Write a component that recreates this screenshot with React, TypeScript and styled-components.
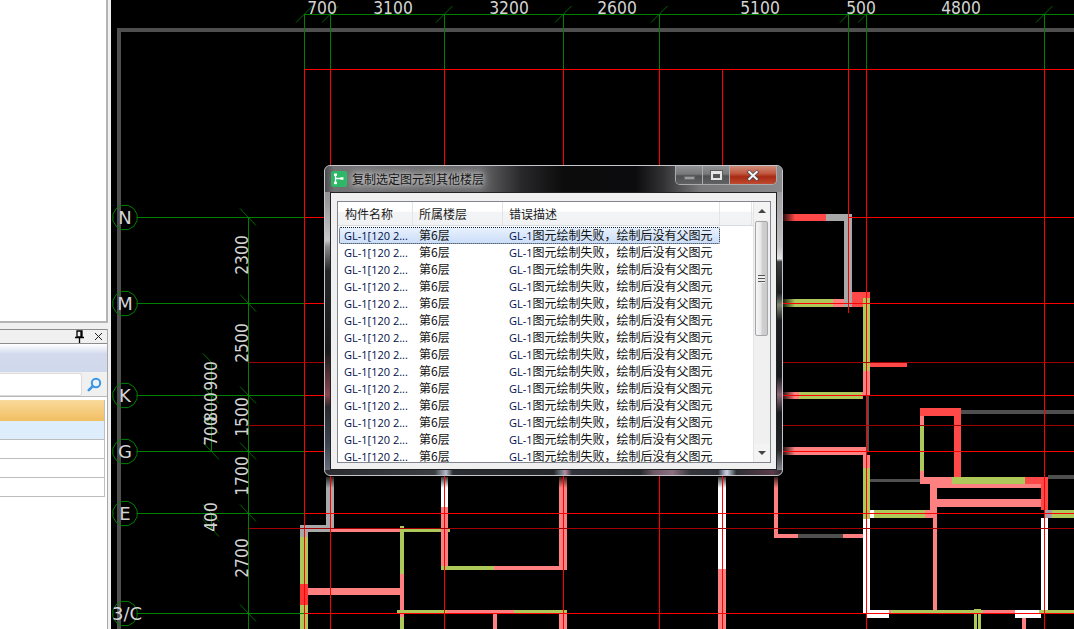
import React from "react";
import styled, { createGlobalStyle } from "styled-components";

const Global = createGlobalStyle`
  html, body { margin: 0; padding: 0; background: #000; overflow: hidden; }
  * { box-sizing: border-box; }
`;

const Page = styled.div`
  display: flex;
  width: 1074px;
  height: 629px;
  overflow: hidden;
`;

/* ---------- left docked panels ---------- */
const Sidebar = styled.aside`
  width: 111px;
  flex: none;
  height: 100%;
  display: flex;
  flex-direction: column;
  background: #f0f0f0;
  padding-right: 3px;
`;
const TopPane = styled.div`
  height: 323px;
  flex: none;
  background: #fff;
  border-right: 2px solid #b4b4b4;
  border-bottom: 2px solid #b4b4b4;
`;
const DockPane = styled.div`
  margin-top: 6px;
  flex: 1;
  min-height: 0;
  display: flex;
  flex-direction: column;
  border-right: 1px solid #a8a8a8;
  background: #fff;
`;
const DockHeader = styled.div`
  height: 15px;
  flex: none;
  display: flex;
  align-items: center;
  justify-content: flex-end;
  gap: 9px;
  padding-right: 4px;
  background: #f0f0f0;
  border-top: 1px solid #8c8c8c;
  border-bottom: 1px solid #8c8c8c;
`;
const Band = styled.div`
  height: 28px;
  flex: none;
  background: linear-gradient(180deg, #fff 0, #d3daee 36%, #d0d8eb 100%);
`;
const SearchRow = styled.div`
  height: 25px;
  flex: none;
  display: flex;
  align-items: center;
  background: #f0f0f0;
  padding: 2px 0 1px 0;
  border-bottom: 1px solid #b8b8b8;
`;
const SearchInput = styled.div`
  width: 82px;
  height: 23px;
  background: #fff;
  border: 1px solid #dcdcdc;
  border-left: none;
  border-radius: 0 3px 3px 0;
`;
const SearchButton = styled.div`
  flex: 1;
  display: flex;
  align-items: center;
  justify-content: center;
`;
const RowList = styled.div`
  flex: 1;
  padding: 3px 2px 0 0;
  background: #fff;
`;
const PanelRow = styled.div<{ $tone: "active" | "hover" | "plain" }>`
  height: 19px;
  border-right: 1px solid #bdbdbd;
  border-bottom: 1px solid #bdbdbd;
  background: ${(p) =>
    p.$tone === "active"
      ? "linear-gradient(180deg, #f9da9c, #f1bf62)"
      : p.$tone === "hover"
      ? "#deedfc"
      : "#fff"};
  ${(p) => (p.$tone === "active" ? "height: 21px; border-bottom: none;" : "")}
`;

/* ---------- CAD canvas ---------- */
const Canvas = styled.main`
  position: relative;
  flex: 1;
  height: 100%;
  background: #000;
  overflow: hidden;
`;
const Drawing = styled.svg`
  display: block;
  width: 963px;
  height: 629px;
`;

const P = "#ff8080";
const G = "#aec95a";
const W = "#ffffff";
const A = "#a8a8a8";
const R = "#ff4848";
const B = "#ff3636";
const D = "#4f4f4f";

type Rect = [number, number, number, number, string];

const walls: Rect[] = [
  // frame
  [117, 28, 957, 4, D],
  [117, 28, 4, 601, D],
  // lower-left rooms
  [326, 477, 8, 48, A],
  [300, 525, 34, 7, A],
  [330, 528, 70, 4, P],
  [400, 528, 50, 4, G],
  [300, 532, 8, 5, A],
  [300, 537, 8, 47, G],
  [300, 584, 8, 21, B],
  [300, 605, 8, 24, G],
  [308, 588, 92, 7, P],
  [400, 526, 4, 48, G],
  [400, 574, 4, 43, P],
  [400, 617, 4, 12, G],
  [397, 610, 50, 3.5, G],
  [447, 610, 67, 3.5, P],
  [514, 610, 53, 3.5, G],
  [493, 613, 4, 16, P],
  [441, 477, 7, 30, W],
  [441, 507, 7, 62, P],
  [441, 566, 53, 3.5, G],
  [494, 566, 73, 3.5, P],
  [559, 477, 8, 92, P],
  [559, 613, 8, 16, P],
  // middle
  [718, 477, 8, 92, W],
  [718, 569, 8, 60, P],
  [774, 477, 4, 60, P],
  [774, 534, 24, 4, P],
  [798, 534, 45, 4, D],
  [843, 534, 20, 4, P],
  // right of the dialog
  [783, 214, 43, 7, R],
  [826, 214, 26, 7, A],
  [844, 221, 8, 86, A],
  [783, 299, 50, 8, G],
  [833, 299, 11, 8, P],
  [852, 292, 18, 15, R],
  [863, 298, 7, 73, G],
  [863, 371, 7, 24, P],
  [870, 363, 37, 3.5, R],
  [783, 392, 16, 7, P],
  [799, 392, 63, 7, G],
  [862, 392, 1, 7, P],
  [867, 395, 2, 56, D],
  [783, 447, 83, 8, P],
  [863, 455, 7, 13, P],
  [863, 468, 7, 51, G],
  [863, 519, 7, 95, W],
  [870, 510, 4, 8, W],
  [874, 510, 51, 8, G],
  [925, 510, 12, 8, P],
  [870, 479, 50, 3, D],
  [933, 518, 4, 92, P],
  [930, 484, 7, 26, P],
  // upper block
  [920, 408, 41, 8, R],
  [920, 416, 4, 9, P],
  [920, 425, 4, 46, G],
  [920, 471, 4, 6, P],
  [954, 416, 7, 61, R],
  [961, 410, 113, 4, D],
  [920, 477, 32, 7, P],
  [952, 477, 73, 7, G],
  [1025, 477, 23, 7, R],
  [937, 484, 104, 4, P],
  [937, 499, 104, 8, P],
  [1041, 484, 7, 26, R],
  [1048, 475, 26, 4, D],
  [1045, 510, 7, 8, "#a0a0a8"],
  [1052, 510, 22, 8, G],
  [1041, 518, 7, 95, W],
  // bottom run
  [867, 610, 22, 8, W],
  [889, 610, 2, 3.5, P],
  [891, 610, 92, 3.5, G],
  [983, 610, 32, 3.5, P],
  [1015, 610, 26, 8, W],
  [1039, 610, 35, 3.5, G],
  [974, 609, 7, 20, G],
  [977, 614, 1, 15, "#000"],
  [1022, 618, 4, 11, P],
];

const redV = [304, 330, 444, 563, 659, 722, 866, 1044];
const greenV = [304, 330, 444, 563, 659, 848, 866, 1044];
const axes: [string, number, number][] = [
  ["N", 217, 125],
  ["M", 303, 125],
  ["K", 395, 125],
  ["G", 451, 125],
  ["E", 513, 125],
  ["3/C", 613, 127],
];
const lines: Rect[] = [
  ...redV.map((x): Rect => [x, 70, 1, 559, "#ff0000"]),
  [848, 70, 1, 243, "#ff0000"],
  ...greenV.map((x): Rect => [x, 14, 1, 56, "#008000"]),
  [304, 14, 770, 1, "#008000"],
  [304, 69, 770, 1, "#ff0000"],
  [304, 217, 22, 1, "#ff0000"],
  [849, 217, 225, 1, "#ff0000"],
  [304, 303, 770, 1, "#ff0000"],
  [304, 395, 770, 1, "#ff0000"],
  [304, 451, 770, 1, "#ff0000"],
  [304, 513, 770, 1, "#ff0000"],
  [304, 613, 770, 1, "#ff0000"],
  [248, 362, 826, 1, "#a00000"],
  [248, 425, 826, 1, "#a00000"],
  [248, 528, 826, 1, "#a00000"],
  ...[217, 303, 395, 451, 513, 613].map((y): Rect => [137, y, 167, 1, "#008000"]),
  [248, 217, 1, 412, "#008000"],
  [211, 362, 1, 89, "#008000"],
  [211, 513, 1, 15, "#008000"],
];
const topTicks: [number, number][] = greenV.map((x): [number, number] => [x, 14]);
const sideTicks: [number, number][] = [
  ...[217, 303, 395, 451, 513, 613].map((y): [number, number] => [248, y]),
  ...[362, 395, 425, 451, 513, 528].map((y): [number, number] => [211, y]),
];
const topDims: [string, number][] = [
  ["700", 322],
  ["3100", 393],
  ["3200", 509],
  ["2600", 617],
  ["5100", 760],
  ["500", 861],
  ["4800", 961],
];
const sideDims: [string, number, number][] = [
  ["2300", 248, 255],
  ["2500", 248, 343],
  ["1500", 248, 417],
  ["1700", 248, 476],
  ["2700", 248, 558],
  ["900", 217, 376],
  ["800", 217, 407],
  ["700", 217, 431],
  ["400", 217, 517],
];

const DimText = styled.text`
  font-family: "DejaVu Sans", sans-serif;
  font-size: 18px;
  fill: #d4d4d4;
`;

function polygon(cx: number, cy: number, r: number) {
  return Array.from({ length: 12 }, (_, i) => {
    const a = (Math.PI / 6) * i + Math.PI / 12;
    return `${(cx + r * Math.cos(a)).toFixed(1)},${(cy + r * Math.sin(a)).toFixed(1)}`;
  }).join(" ");
}

function Plan() {
  return (
    <Drawing viewBox="111 0 963 629">
      <defs>
        <linearGradient id="fadeDown" x1="0" y1="0" x2="0" y2="1">
          <stop offset="0" stopColor="#000" stopOpacity="0.85" />
          <stop offset="1" stopColor="#000" stopOpacity="0" />
        </linearGradient>
        <linearGradient id="fadeRight" x1="0" y1="0" x2="1" y2="0">
          <stop offset="0" stopColor="#000" stopOpacity="0.85" />
          <stop offset="1" stopColor="#000" stopOpacity="0" />
        </linearGradient>
      </defs>
      <g shapeRendering="crispEdges">
        {walls.map(([x, y, w, h, c], i) => (
          <rect key={i} x={x} y={y} width={w} height={h} fill={c} />
        ))}
      </g>
      <rect x="318" y="476" width="470" height="12" fill="url(#fadeDown)" />
      <rect x="783" y="160" width="12" height="320" fill="url(#fadeRight)" />
      <g shapeRendering="crispEdges">
        {lines.map(([x, y, w, h, c], i) => (
          <rect key={i} x={x} y={y} width={w} height={h} fill={c} />
        ))}
      </g>
      <g stroke="#008000" strokeWidth="0.8">
        {topTicks.map(([x, y]) => (
          <line key={x} x1={x - 8} y1={y + 8.5} x2={x + 8.5} y2={y - 8} />
        ))}
        {sideTicks.map(([x, y], i) => (
          <line key={i} x1={x - 8} y1={y - 8.5} x2={x + 8} y2={y + 8.5} />
        ))}
      </g>
      {axes.map(([label, y, cx]) => (
        <g key={label}>
          <polygon points={polygon(125, y + 0.5, 12.5)} fill="none" stroke="#008000" strokeWidth="1" />
          <DimText x={cx} y={y + 7} textAnchor="middle">
            {label}
          </DimText>
        </g>
      ))}
      {topDims.map(([t, x]) => (
        <DimText key={x} x={x} y={14} textAnchor="middle" textLength={t.length * 9.9} lengthAdjust="spacingAndGlyphs">
          {t}
        </DimText>
      ))}
      {sideDims.map(([t, x, y]) => (
        <DimText
          key={y}
          x={x}
          y={y}
          textAnchor="middle"
          textLength={t.length * 9.9}
          lengthAdjust="spacingAndGlyphs"
          transform={`rotate(-90 ${x} ${y})`}
        >
          {t}
        </DimText>
      ))}
    </Drawing>
  );
}

/* ---------- Aero dialog ---------- */
const Dialog = styled.section`
  position: absolute;
  left: 213px;
  top: 165px;
  width: 459px;
  height: 311px;
  display: flex;
  flex-direction: column;
  padding: 0 5px 5px;
  border: 1px solid #c4c6cc;
  border-radius: 6px;
  background:
    linear-gradient(
        90deg,
        #2a2c30 0,
        #3a3d42 24%,
        #b4bccb 26.5%,
        #2a2d31 28%,
        #25272a 50%,
        #7b8794 52%,
        #c08ca0 52.5%,
        #30333a 54%,
        #282a2d 69%,
        #6e5b68 72%,
        #8c6f80 76%,
        #34363b 80%,
        #30323a 86%,
        #aebad0 87.5%,
        #c8d0e0 88%,
        #2d3036 90%,
        #5a3a48 98%,
        #2a2c30 100%
      )
      bottom / 100% 5px no-repeat,
    linear-gradient(
        180deg,
        #7e8082 0,
        #9a9a9c 12%,
        #c8c8ca 24%,
        #8c8c8e 26%,
        #252628 34%,
        #18191b 60%,
        #8a4650 74%,
        #28292c 78%,
        #3c4452 90%,
        #6c7484 100%
      )
      left / 5px 100% no-repeat,
    linear-gradient(
        180deg,
        #7a7a7c 0,
        #a4a4a6 10%,
        #c0c0c2 26%,
        #e4e4e6 30%,
        #3a3c3e 31%,
        #1c1d1f 41%,
        #7c8470 45%,
        #1c1d20 50%,
        #16181b 68%,
        #8a6878 74%,
        #16181b 80%,
        #25272a 92%,
        #9aa0a8 100%
      )
      right / 5px 100% no-repeat,
    #101012;
  overflow: hidden;
`;
const TitleBar = styled.header`
  height: 26px;
  flex: none;
  margin: 0 -5px;
  display: flex;
  align-items: flex-start;
  padding: 5px 5px 0 6px;
  background: linear-gradient(
    90deg,
    #4c4c4e 0,
    #727274 2%,
    #666668 34%,
    #28282a 43%,
    #0c0c0c 52%,
    #0c0c0e 68%,
    #323234 74%,
    #78787a 82%,
    #8a8a8c 100%
  );
`;
const AppIcon = styled.svg`
  width: 16px;
  height: 16px;
  flex: none;
`;
const TitleText = styled.span`
  margin-left: 5px;
  font-family: "Noto Sans CJK SC", "Liberation Sans", sans-serif;
  font-size: 12px;
  line-height: 15px;
  color: #151515;
  text-shadow: 0 0 5px rgba(225, 225, 225, 0.95), 0 0 9px rgba(225, 225, 225, 0.85),
    0 0 14px rgba(210, 210, 210, 0.7);
`;
const Controls = styled.div`
  display: flex;
  margin: -5px 0 0 auto;
  height: 19px;
  border: 1px solid #a8aab0;
  border-top: none;
  border-radius: 0 0 5px 5px;
  overflow: hidden;
`;
const CtrlButton = styled.div<{ $kind: "min" | "max" | "close" }>`
  width: ${(p) => (p.$kind === "close" ? "46px" : "27px")};
  display: flex;
  align-items: center;
  justify-content: center;
  border-right: ${(p) => (p.$kind === "close" ? "none" : "1px solid #a8aab0")};
  background: ${(p) =>
    p.$kind === "close"
      ? "linear-gradient(180deg, #cf8a7a 0, #c25a42 40%, #a82a12 60%, #bf4a30 100%)"
      : "linear-gradient(180deg, #8e9092 0, #77797b 45%, #4e5052 55%, #606264 100%)"};
`;
const MinGlyph = styled.div`
  width: 11px;
  height: 4px;
  background: #9a9c9e;
  border: 1px solid #6a6c6e;
  margin-top: 5px;
`;
const MaxGlyph = styled.div`
  width: 11px;
  height: 9px;
  border: 2px solid #e4e6e8;
  border-top-width: 3px;
  background: #555759;
  outline: 1px solid #5a5c5e;
`;
const Client = styled.div`
  flex: 1;
  min-height: 0;
  display: flex;
  background: #f0f0f0;
  border: 1px solid #222;
  padding: 8px 5px 6px 6px;
`;
const ListView = styled.div`
  flex: 1;
  min-width: 0;
  display: flex;
  background: #fff;
  border: 1px solid #83868e;
  overflow: hidden;
`;
const ListBody = styled.div`
  flex: 1;
  min-width: 0;
  display: flex;
  flex-direction: column;
  overflow: hidden;
`;
const columns = "75px 90px 217px 32px";
const HeadRow = styled.div`
  display: grid;
  grid-template-columns: ${columns};
  height: 24px;
  flex: none;
  background: linear-gradient(180deg, #fff 0, #fff 40%, #f3f4f6 45%, #f1f2f4 100%);
  border-bottom: 1px solid #d8dbe0;
  margin-bottom: 1px;
  font-family: "Noto Sans CJK SC", "Liberation Sans", sans-serif;
  font-size: 12px;
`;
const HeadCell = styled.div<{ $inset: number }>`
  display: flex;
  align-items: center;
  padding-left: ${(p) => p.$inset}px;
  padding-bottom: 1px;
  color: #1a1a1a;
  border-right: 1px solid #e2e4e8;
`;
const DataRow = styled.div<{ $selected?: boolean }>`
  display: grid;
  grid-template-columns: 75px 90px 217px;
  height: 17px;
  flex: none;
  align-items: start;
  margin-right: 33px;
  font-family: "Noto Sans CJK SC", "Liberation Sans", sans-serif;
  font-size: 12px;
  line-height: 15px;
  color: #111;
  white-space: nowrap;
  ${(p) =>
    p.$selected
      ? `
    margin-left: 1px;
    outline: 1px dotted #123;
    outline-offset: -1px;
    border-radius: 2px;
    background: linear-gradient(180deg, #eaf3fe, #c9dcf7);
    grid-template-columns: 74px 90px 216px;
  `
      : ""}
`;
const DataCell = styled.div<{ $inset: number }>`
  padding-left: ${(p) => p.$inset}px;
  overflow: hidden;
`;
const Latin = styled.span`
  font-family: "Open Sans", "Liberation Sans", sans-serif;
  font-size: 11px;
  font-weight: 500;
  color: #00104a;
`;
const Scrollbar = styled.div`
  width: 17px;
  flex: none;
  display: flex;
  flex-direction: column;
  background: #f0f0f0;
  border-left: 1px solid #e4e4e4;
`;
const ScrollArrow = styled.div`
  height: 18px;
  flex: none;
  display: flex;
  align-items: center;
  justify-content: center;
  background: #f3f3f3;
`;
const ScrollThumb = styled.div`
  height: 115px;
  margin: 1px 2px 0 1px;
  flex: none;
  display: flex;
  align-items: center;
  justify-content: center;
  border: 1px solid #a4a6a8;
  border-radius: 2px;
  background: linear-gradient(90deg, #f6f6f6 0, #e8e8e8 45%, #d0d0d0 55%, #cacaca 100%);
`;
const ScrollTrack = styled.div`
  flex: 1;
`;
const Grip = styled.div`
  width: 7px;
  height: 8px;
  background: repeating-linear-gradient(180deg, #555 0, #555 1px, #eee 1px, #eee 3px);
`;
const Triangle = styled.div<{ $up?: boolean }>`
  width: 0;
  height: 0;
  border-left: 4px solid transparent;
  border-right: 4px solid transparent;
  ${(p) => (p.$up ? "border-bottom: 4px solid #444;" : "border-top: 4px solid #444;")}
`;

const rows = Array.from({ length: 14 }, (_, i) => i);

export default function App() {
  return (
    <Page>
      <Global />
      <Sidebar>
        <TopPane />
        <DockPane>
          <DockHeader>
            <svg width="11" height="13" viewBox="0 0 11 13">
              <path d="M3 1h5v6H3zM1 7.5h9M5.5 8v5M7 1v6" fill="none" stroke="#000" strokeWidth="1.3" />
            </svg>
            <svg width="9" height="9" viewBox="0 0 9 9">
              <path d="M1 1l7 7M8 1l-7 7" stroke="#222" strokeWidth="1" />
            </svg>
          </DockHeader>
          <Band />
          <SearchRow>
            <SearchInput />
            <SearchButton>
              <svg width="15" height="15" viewBox="0 0 15 15">
                <circle cx="9" cy="6" r="4.2" fill="#e8f4fd" stroke="#3a96e4" strokeWidth="2" />
                <path d="M5.8 9.2L1.8 13.2" stroke="#3a96e4" strokeWidth="2.6" strokeLinecap="round" />
              </svg>
            </SearchButton>
          </SearchRow>
          <RowList>
            <PanelRow $tone="active" />
            <PanelRow $tone="hover" />
            <PanelRow $tone="plain" />
            <PanelRow $tone="plain" />
            <PanelRow $tone="plain" />
          </RowList>
        </DockPane>
      </Sidebar>
      <Canvas>
        <Plan />
        <Dialog>
          <TitleBar>
            <AppIcon viewBox="0 0 16 16">
              <rect x="0" y="0" width="16" height="16" rx="2.5" fill="#2cb866" />
              <path d="M4.5 3.5v9M4.5 7.5h7" stroke="#fff" strokeWidth="1.3" fill="none" />
              <rect x="3" y="2.5" width="3" height="2.4" fill="#fff" />
              <rect x="3" y="10.8" width="3" height="2.4" fill="#fff" />
              <rect x="9.5" y="6.3" width="3" height="2.4" fill="#fff" />
            </AppIcon>
            <TitleText>复制选定图元到其他楼层</TitleText>
            <Controls>
              <CtrlButton $kind="min">
                <MinGlyph />
              </CtrlButton>
              <CtrlButton $kind="max">
                <MaxGlyph />
              </CtrlButton>
              <CtrlButton $kind="close">
                <svg width="14" height="11" viewBox="0 0 14 11">
                  <path d="M2 1l10 9M12 1L2 10" stroke="#40454c" strokeWidth="3.6" />
                  <path d="M2.5 1.2l9 8.6M11.5 1.2l-9 8.6" stroke="#f2f4f6" strokeWidth="2.2" />
                </svg>
              </CtrlButton>
            </Controls>
          </TitleBar>
          <Client>
            <ListView>
              <ListBody>
                <HeadRow>
                  <HeadCell $inset={7}>构件名称</HeadCell>
                  <HeadCell $inset={6}>所属楼层</HeadCell>
                  <HeadCell $inset={6}>错误描述</HeadCell>
                  <HeadCell $inset={0} />
                </HeadRow>
                {rows.map((i) => (
                  <DataRow key={i} $selected={i === 0}>
                    <DataCell $inset={i === 0 ? 5 : 6}>
                      <Latin>GL-1[120 2...</Latin>
                    </DataCell>
                    <DataCell $inset={6}>第6层</DataCell>
                    <DataCell $inset={6}>
                      <Latin>GL-1</Latin>图元绘制失败，绘制后没有父图元
                    </DataCell>
                  </DataRow>
                ))}
              </ListBody>
              <Scrollbar>
                <ScrollArrow>
                  <Triangle $up />
                </ScrollArrow>
                <ScrollThumb>
                  <Grip />
                </ScrollThumb>
                <ScrollTrack />
                <ScrollArrow>
                  <Triangle />
                </ScrollArrow>
              </Scrollbar>
            </ListView>
          </Client>
        </Dialog>
      </Canvas>
    </Page>
  );
}
